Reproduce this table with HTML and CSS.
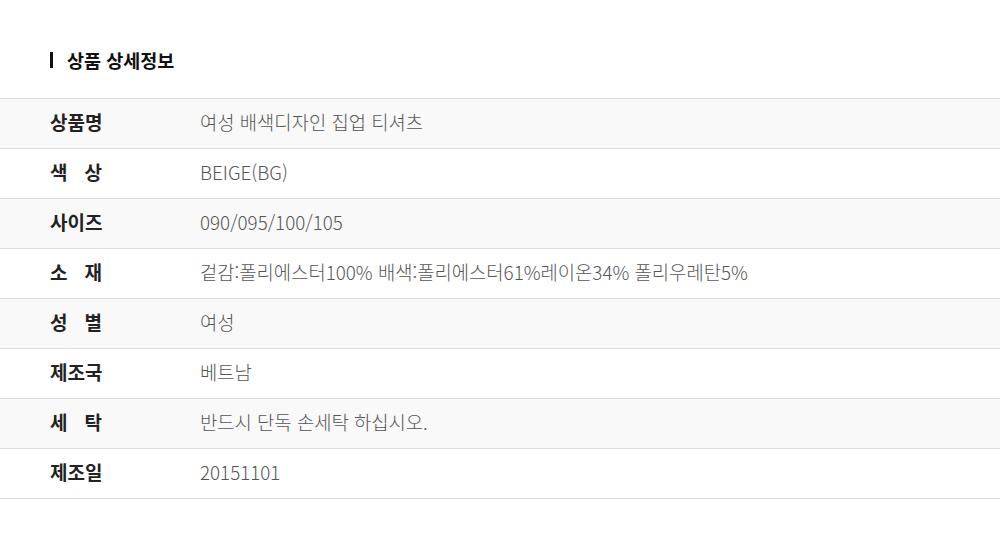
FILE: index.html
```html
<!DOCTYPE html>
<html lang="ko">
	<head>
		<meta charset="UTF-8" />
		<meta name="viewport" content="width=device-width, initial-scale=1.0" />
		<title>상품 상세정보</title>
		<link rel="stylesheet" href="styles.css">
	</head>

	<body>
		<div class="detail">
			<h2 class="detail-title">상품 상세정보</h2>
			<div class="detail-table">
				<div class="row">
					<div class="label">상품명</div>
					<div class="value">여성 배색디자인 집업 티셔츠</div>
				</div>
				<div class="row">
					<div class="label spread">색 상</div>
					<div class="value">BEIGE(BG)</div>
				</div>
				<div class="row">
					<div class="label">사이즈</div>
					<div class="value">090/095/100/105</div>
				</div>
				<div class="row">
					<div class="label spread">소 재</div>
					<div class="value">겉감:폴리에스터100% 배색:폴리에스터61%레이온34% 폴리우레탄5%</div>
				</div>
				<div class="row">
					<div class="label spread">성 별</div>
					<div class="value">여성</div>
				</div>
				<div class="row">
					<div class="label">제조국</div>
					<div class="value">베트남</div>
				</div>
				<div class="row">
					<div class="label spread">세 탁</div>
					<div class="value">반드시 단독 손세탁 하십시오.</div>
				</div>
				<div class="row">
					<div class="label">제조일</div>
					<div class="value">20151101</div>
				</div>
			</div>
		</div>
	</body>
</html>
```

FILE: styles.css
```css
html, body {
	margin: 0;
	padding: 0;
	background-color: #fff;
	font-family: "Noto Sans CJK KR", "Noto Sans", sans-serif;
}

h1, h2, h3, h4, h5, h6 {
	margin: 0;
}

.detail {
	padding-top: 47px;
}

.detail-title {
	display: flex;
	align-items: center;
	margin: 0 0 25px 50px;
	height: 26px;
	font-size: 18.5px;
	font-weight: 700;
	color: #111;
}

.detail-title::before {
	content: "";
	display: block;
	width: 3px;
	height: 16px;
	margin-right: 14px;
	background-color: #111;
}

.detail-table {
	border-top: 1px solid #ddd;
}

.row {
	box-sizing: border-box;
	display: flex;
	align-items: center;
	height: 50px;
	padding-bottom: 4px;
	border-bottom: 1px solid #ddd;
}

.row:nth-child(odd) {
	background-color: #f9f9f9;
}

.label {
	box-sizing: border-box;
	width: 200px;
	padding-left: 50px;
	font-size: 19px;
	font-weight: 700;
	color: #222;
}

.label.spread {
	width: 102px;
	margin-right: 98px;
	text-align: justify;
	text-align-last: justify;
}

.value {
	font-size: 18.8px;
	font-weight: 300;
	color: #555;
}
```
